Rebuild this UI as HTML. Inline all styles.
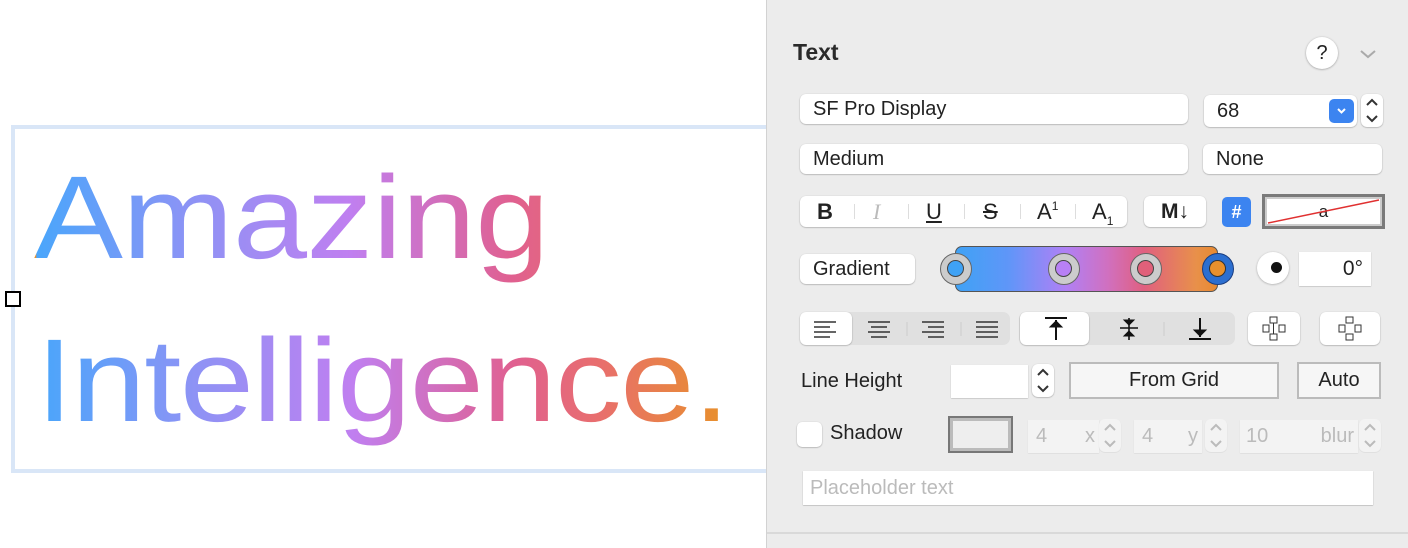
<!DOCTYPE html>
<html><head><meta charset="utf-8"><style>
*{box-sizing:border-box;margin:0;padding:0}
body{width:1408px;height:548px;position:relative;overflow:hidden;background:#fff;font-family:"Liberation Sans",sans-serif;color:#222}
.a{position:absolute}
.f{position:absolute;background:#fff;border-radius:6px;box-shadow:0 0.5px 1.5px rgba(0,0,0,.35);font-size:20px;line-height:30px;padding-left:13px}
.g{position:absolute;background:#e0e0e0;border-radius:7px}
.t{font-size:118px;line-height:1;padding-bottom:34px;position:absolute;left:34px;white-space:nowrap;transform:scaleX(1.13);transform-origin:0 0;background:linear-gradient(90deg,#4aa6fb 0%,#8d93f5 22%,#c07ff0 45%,#e06090 68%,#e86e6e 80%,#e8902c 98%);-webkit-background-clip:text;background-clip:text;color:transparent;background-size:619px 100%;background-position:2px 0}
.st{position:absolute;width:22px;height:33px;background:#fff;border-radius:6px;box-shadow:0 0.5px 1.5px rgba(0,0,0,.35);font-size:12px;text-align:center;line-height:14px;color:#333}
.dis{color:#bbb;background:#f3f3f3;box-shadow:0 0.5px 1px rgba(0,0,0,.1)}
</style></head><body>
<div class="a" style="left:11px;top:125px;width:760px;height:348px;border:4px solid #d9e6f7;border-right:none"></div>
<div class="t" style="top:159px;letter-spacing:-0.5px">Amazing</div>
<div class="t" style="top:322px;left:36px;letter-spacing:-1.3px">Intelligence.</div>
<div class="a" style="left:5px;top:291px;width:16px;height:16px;border:2px solid #000;background:#fff"></div>

<div class="a" style="left:766px;top:0;width:642px;height:548px;background:#ececec;border-left:1px solid #d2d2d2"></div>
<div class="a" style="left:767px;top:532px;width:641px;height:2px;background:#d9d9d9"></div>
<div class="a" style="left:793px;top:39px;font-size:23px;font-weight:bold;color:#2a2a2a">Text</div>
<div class="a" style="left:1306px;top:37px;width:32px;height:32px;border-radius:50%;background:#fff;box-shadow:0 0.5px 2px rgba(0,0,0,.35);text-align:center;line-height:32px;font-size:20px">?</div>
<svg class="a" style="left:1359px;top:48px" width="18" height="12"><path d="M2 3l7 6 7-6" fill="none" stroke="#aaa" stroke-width="2"/></svg>

<div class="f" style="left:800px;top:94px;width:388px;height:30px">SF Pro Display</div>
<div class="f" style="left:1204px;top:95px;width:153px;height:32px;line-height:32px">68</div>
<div class="a" style="left:1329px;top:99px;width:25px;height:24px;background:#3c84f0;border-radius:5px"><svg width="25" height="24"><path d="M9 10l3.5 3.5L16 10" fill="none" stroke="#fff" stroke-width="2"/></svg></div>
<div class="st" style="left:1361px;top:94px"><svg width="22" height="33"><path d="M6 11l5-5 5 5M6 22l5 5 5-5" fill="none" stroke="#333" stroke-width="2"/></svg></div>
<div class="f" style="left:800px;top:144px;width:388px;height:30px">Medium</div>
<div class="f" style="left:1203px;top:144px;width:179px;height:30px">None</div>

<div class="f" style="left:800px;top:196px;width:327px;height:31px;padding:0;font-size:22px;line-height:31px">
<span class="a" style="left:17px;font-weight:bold">B</span>
<span class="a" style="left:73px;font-style:italic;color:#bbb;font-family:'Liberation Serif',serif">I</span>
<span class="a" style="left:126px;text-decoration:underline">U</span>
<span class="a" style="left:183px;text-decoration:line-through">S</span>
<span class="a" style="left:237px;top:0">A<span style="font-size:12px;vertical-align:top;line-height:20px">1</span></span>
<span class="a" style="left:292px;top:0">A<span style="font-size:12px;position:relative;top:6px">1</span></span>
<span class="a" style="left:54px;top:8px;width:1px;height:15px;background:#ddd"></span><span class="a" style="left:108px;top:8px;width:1px;height:15px;background:#ddd"></span><span class="a" style="left:164px;top:8px;width:1px;height:15px;background:#ddd"></span><span class="a" style="left:220px;top:8px;width:1px;height:15px;background:#ddd"></span><span class="a" style="left:275px;top:8px;width:1px;height:15px;background:#ddd"></span>
</div>
<div class="f" style="left:1144px;top:196px;width:62px;height:31px;padding:0;text-align:center;font-weight:bold;font-size:21px;line-height:31px">M&#x2193;</div>
<div class="a" style="left:1222px;top:197px;width:29px;height:30px;background:#3c84f0;border-radius:5px;color:#fff;text-align:center;line-height:30px;font-weight:bold;font-size:18px">#</div>
<div class="a" style="left:1262px;top:194px;width:123px;height:35px;border:3px solid #7a7a7a;background:#fff;box-shadow:inset 0 0 0 2px #ccc;text-align:center;font-size:17px;line-height:30px">a<svg class="a" style="left:0;top:0" width="117" height="29"><path d="M3 26L114 3" stroke="#e03030" stroke-width="1.5"/></svg></div>

<div class="f" style="left:800px;top:254px;width:115px;height:30px">Gradient</div>
<div class="a" style="left:955px;top:246px;width:263px;height:46px;border:1px solid #555;border-radius:7px;background:linear-gradient(90deg,#3fa2f5 0%,#5f96f8 20%,#b080f5 42%,#d070c0 58%,#e06080 72%,#e8904a 92%,#e88a30 100%)"></div>
<div class="a" style="left:940px;top:253px;width:32px;height:32px;border-radius:50%;background:#ccc;border:1.5px solid #666"><div class="a" style="left:6px;top:6px;width:17px;height:17px;border-radius:50%;background:#3fa2f5;border:1.5px solid #444"></div></div>
<div class="a" style="left:1048px;top:253px;width:32px;height:32px;border-radius:50%;background:#ccc;border:1.5px solid #666"><div class="a" style="left:6px;top:6px;width:17px;height:17px;border-radius:50%;background:#b880f5;border:1.5px solid #444"></div></div>
<div class="a" style="left:1130px;top:253px;width:32px;height:32px;border-radius:50%;background:#ccc;border:1.5px solid #666"><div class="a" style="left:6px;top:6px;width:17px;height:17px;border-radius:50%;background:#e0607a;border:1.5px solid #444"></div></div>
<div class="a" style="left:1202px;top:253px;width:32px;height:32px;border-radius:50%;background:#2c6fd0;border:1.5px solid #1a3d80"><div class="a" style="left:6px;top:6px;width:17px;height:17px;border-radius:50%;background:#e8902c;border:1.5px solid #333"></div></div>
<div class="a" style="left:1257px;top:252px;width:32px;height:32px;border-radius:50%;background:#fff;box-shadow:0 0.5px 2px rgba(0,0,0,.3)"><div class="a" style="left:14px;top:10px;width:11px;height:11px;border-radius:50%;background:#111"></div></div>
<div class="a" style="left:1299px;top:252px;width:72px;height:34px;background:#fff;box-shadow:0 0.5px 1px rgba(0,0,0,.25);text-align:right;padding-right:8px;font-size:21px;line-height:34px">0°</div>

<div class="g" style="left:800px;top:312px;width:210px;height:33px"></div>
<div class="f" style="left:800px;top:312px;width:52px;height:33px"></div>
<svg class="a" style="left:800px;top:312px" width="210" height="33">
<g stroke="#333" stroke-width="1.6">
<path d="M14 10h22M14 15h16M14 20h22M14 25h16"/>
<path d="M68 10h22M71 15h16M68 20h22M71 25h16"/>
<path d="M122 10h22M128 15h16M122 20h22M128 25h16"/>
<path d="M176 10h22M176 15h22M176 20h22M176 25h22"/></g>
<path d="M107 10v14M161 10v14" stroke="#ccc"/></svg>
<div class="g" style="left:1019px;top:312px;width:216px;height:33px"></div>
<div class="f" style="left:1020px;top:312px;width:69px;height:33px"></div>
<svg class="a" style="left:1019px;top:312px" width="216" height="33">
<g stroke="#111" stroke-width="2" fill="#111">
<path d="M26 6h22" /><path d="M37 8v20" /><path d="M31 15l6-6 6 6z" stroke-width="1"/>
<path d="M110 6v22M101 16h18" stroke-width="1.6"/><path d="M105 8l5 5 5-5zM105 24l5-5 5 5z" stroke-width="1"/>
<path d="M170 27h22"/><path d="M181 6v19"/><path d="M175 18l6 6 6-6z" stroke-width="1"/></g>
<path d="M145 10v14" stroke="#ccc"/></svg>
<div class="f" style="left:1248px;top:312px;width:52px;height:33px;padding:0"><svg width="52" height="33"><g fill="#fff" stroke="#333" stroke-width="1"><rect x="22" y="5" width="7" height="6"/><rect x="22" y="22" width="7" height="6"/><rect x="15" y="13" width="6" height="7"/><rect x="31" y="13" width="6" height="7"/></g><path d="M25.5 11v11M23 11h5M23 22h5" stroke="#333"/></svg></div>
<div class="f" style="left:1320px;top:312px;width:60px;height:33px;padding:0"><svg width="60" height="33"><g fill="#fff" stroke="#333" stroke-width="1"><rect x="26" y="5" width="7" height="6"/><rect x="26" y="22" width="7" height="6"/><rect x="19" y="13" width="6" height="7"/><rect x="35" y="13" width="6" height="7"/></g></svg></div>

<div class="a" style="left:801px;top:370px;font-size:20px">Line Height</div>
<div class="a" style="left:951px;top:365px;width:77px;height:33px;background:#fff;box-shadow:0 0.5px 1px rgba(0,0,0,.25)"></div>
<div class="st" style="left:1032px;top:364px"><svg width="22" height="33"><path d="M6 11l5-5 5 5M6 22l5 5 5-5" fill="none" stroke="#333" stroke-width="2"/></svg></div>
<div class="a" style="left:1069px;top:362px;width:210px;height:37px;border:2px solid #bbb;background:#f6f6f6;text-align:center;line-height:33px;font-size:20px">From Grid</div>
<div class="a" style="left:1297px;top:362px;width:84px;height:37px;border:2px solid #bbb;background:#f6f6f6;text-align:center;line-height:33px;font-size:20px">Auto</div>

<div class="a" style="left:797px;top:422px;width:25px;height:25px;border-radius:5px;background:#fff;box-shadow:0 0.5px 1.5px rgba(0,0,0,.35)"></div>
<div class="a" style="left:830px;top:422px;font-size:20px">Shadow</div>
<div class="a" style="left:948px;top:416px;width:65px;height:37px;border:2px solid #777;background:#eee;box-shadow:inset 0 0 0 3px #bbb"></div>
<div class="a dis" style="left:1028px;top:420px;width:71px;height:33px;font-size:20px;line-height:33px;padding-left:8px">4<span class="a" style="right:4px">x</span></div>
<div class="st dis" style="left:1099px;top:419px"><svg width="22" height="33"><path d="M6 11l5-5 5 5M6 22l5 5 5-5" fill="none" stroke="#bbb" stroke-width="2"/></svg></div>
<div class="a dis" style="left:1134px;top:420px;width:68px;height:33px;font-size:20px;line-height:33px;padding-left:8px">4<span class="a" style="right:4px">y</span></div>
<div class="st dis" style="left:1205px;top:419px"><svg width="22" height="33"><path d="M6 11l5-5 5 5M6 22l5 5 5-5" fill="none" stroke="#bbb" stroke-width="2"/></svg></div>
<div class="a dis" style="left:1240px;top:420px;width:118px;height:33px;font-size:20px;line-height:33px;padding-left:6px">10<span class="a" style="right:4px">blur</span></div>
<div class="st dis" style="left:1359px;top:419px"><svg width="22" height="33"><path d="M6 11l5-5 5 5M6 22l5 5 5-5" fill="none" stroke="#bbb" stroke-width="2"/></svg></div>

<div class="a" style="left:803px;top:471px;width:570px;height:34px;background:#fff;box-shadow:0 0.5px 1px rgba(0,0,0,.3);color:#bbb;font-size:20px;line-height:34px;padding-left:7px">Placeholder text</div>
</body></html>
